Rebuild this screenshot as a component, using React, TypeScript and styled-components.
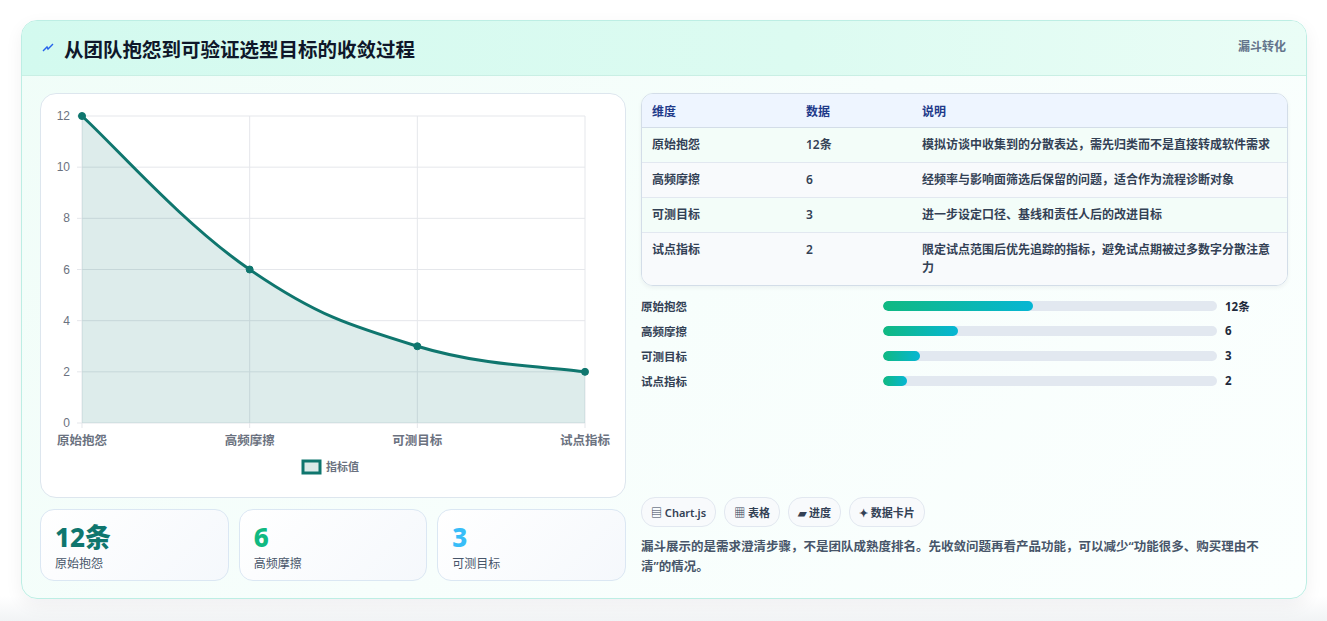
import React from 'react';
import styled, { createGlobalStyle } from 'styled-components';

const Global = createGlobalStyle`
  html, body { margin: 0; background: #fff; }
  body { font-family: "Noto Sans", "Noto Sans CJK SC", sans-serif; color: #1e293b; }
`;

const Page = styled.div`
  padding: 20px 20px 22px 21px;
  background: linear-gradient(180deg, #fff 0%, #fff 96%, #f1f3f5 100%);
`;

const Card = styled.section`
  border: 1px solid #bdeee4;
  border-radius: 16px;
  overflow: hidden;
  background: linear-gradient(135deg, #f0fdf8 0%, #f7fefc 50%, #fbfffe 100%);
  box-shadow: 0 6px 18px rgba(15, 23, 42, 0.06);
`;

const Header = styled.header`
  height: 54px;
  display: flex;
  align-items: center;
  justify-content: space-between;
  padding: 0 20px 0 20px;
  background: linear-gradient(90deg, #d3faef 0%, #dcfbf1 60%, #eafdf6 100%);
  border-bottom: 1px solid #c9efe4;
`;

const Title = styled.h2`
  margin: 0;
  display: flex;
  align-items: center;
  gap: 10px;
  font-size: 19.5px;
  font-weight: 700;
  color: #0f172a;
`;

const Tag = styled.span`
  align-self: flex-start;
  margin-top: 16px;
  font-size: 12px;
  font-weight: 700;
  color: #64748b;
`;

const Body = styled.div`
  display: grid;
  grid-template-columns: 586px 1fr;
  gap: 15px;
  padding: 17px 18px 17px 18px;
`;

const Left = styled.div`
  display: flex;
  flex-direction: column;
  gap: 11px;
`;

const ChartCard = styled.div`
  height: 403px;
  border: 1px solid #dde6ee;
  border-radius: 16px;
  background: #fff;
`;

const Stats = styled.div`
  display: grid;
  grid-template-columns: repeat(3, 1fr);
  gap: 10px;
`;

const Stat = styled.div`
  height: 72px;
  box-sizing: border-box;
  border: 1px solid #dbe7f3;
  border-radius: 14px;
  background: linear-gradient(135deg, #ffffff, #f5f8fc);
  padding: 11px 14px;
`;

const StatValue = styled.div<{ $c: string }>`
  font-size: 26px;
  font-weight: 800;
  line-height: 32px;
  color: ${(p) => p.$c};
`;

const StatLabel = styled.div`
  font-size: 12px;
  color: #475569;
  margin-top: 1px;
`;

const Right = styled.div`
  display: flex;
  flex-direction: column;
`;

const Table = styled.table`
  width: 100%;
  border-collapse: separate;
  border-spacing: 0;
  border: 1px solid #d3dde8;
  border-radius: 12px;
  overflow: hidden;
  font-size: 12px;
  box-shadow: 0 2px 4px rgba(15, 23, 42, 0.05);
  th {
    background: #eef5ff;
    color: #1e3a8a;
    font-weight: 700;
    text-align: left;
    height: 33px;
    padding: 0 10px;
    border-bottom: 1px solid #d3dde8;
  }
  td {
    font-weight: 600;
    color: #334155;
    padding: 8px 10px;
    line-height: 18px;
    vertical-align: top;
    border-bottom: 1px solid #e2e8f0;
  }
  td:last-child { padding-right: 14px; }
  tr:last-child td { border-bottom: none; }
  tbody tr:nth-child(odd) { background: #f3fdf9; }
  tbody tr:nth-child(even) { background: #f8fafc; }
`;

const Bars = styled.div`
  display: flex;
  flex-direction: column;
  gap: 8px;
  padding: 11px 0 108px;
`;

const BarRow = styled.div`
  display: grid;
  grid-template-columns: 242px 334px 1fr;
  align-items: center;
  height: 17px;
  font-size: 11.5px;
  font-weight: 600;
  color: #334155;
`;

const Track = styled.div`
  height: 10px;
  border-radius: 5px;
  background: #e2e8f0;
  overflow: hidden;
`;

const Fill = styled.div`
  height: 100%;
  border-radius: 5px;
  background: linear-gradient(90deg, #10b981, #06b6d4);
`;

const BarNum = styled.span`
  padding-left: 8px;
  font-weight: 700;
  color: #1e293b;
`;

const Chips = styled.div`
  display: flex;
  gap: 8px;
`;

const Chip = styled.span`
  height: 28px;
  display: inline-flex;
  align-items: center;
  padding: 0 9px;
  border: 1px solid #e2e8f0;
  border-radius: 14px;
  background: #f8fafc;
  font-size: 11px;
  font-weight: 600;
  color: #334155;
`;

const Note = styled.p`
  margin: 10px 0 0;
  font-size: 12.5px;
  font-weight: 600;
  line-height: 20px;
  color: #475569;
`;

const rows = [
  ['原始抱怨', '12条', '模拟访谈中收集到的分散表达，需先归类而不是直接转成软件需求'],
  ['高频摩擦', '6', '经频率与影响面筛选后保留的问题，适合作为流程诊断对象'],
  ['可测目标', '3', '进一步设定口径、基线和责任人后的改进目标'],
  ['试点指标', '2', '限定试点范围后优先追踪的指标，避免试点期被过多数字分散注意力'],
];

const bars = [
  ['原始抱怨', 45, '12条'],
  ['高频摩擦', 22.5, '6'],
  ['可测目标', 11, '3'],
  ['试点指标', 7.2, '2'],
] as const;

function Chart() {
  const x0 = 41, x1 = 544, y0 = 22, y1 = 329;
  const vals = [12, 6, 3, 2];
  const pts = vals.map((v, i) => [x0 + (i * (x1 - x0)) / 3, y1 - (v / 12) * (y1 - y0)]);
  const t = 0.4;
  let d = `M${pts[0][0]},${pts[0][1]}`;
  for (let i = 0; i < 3; i++) {
    const p0 = pts[Math.max(i - 1, 0)], p1 = pts[i], p2 = pts[i + 1], p3 = pts[Math.min(i + 2, 3)];
    const c1 = [p1[0] + ((p2[0] - p0[0]) * t) / 2, p1[1] + ((p2[1] - p0[1]) * t) / 2];
    const c2 = [p2[0] - ((p3[0] - p1[0]) * t) / 2, p2[1] - ((p3[1] - p1[1]) * t) / 2];
    d += ` C${c1[0]},${c1[1]} ${c2[0]},${c2[1]} ${p2[0]},${p2[1]}`;
  }
  const labels = ['原始抱怨', '高频摩擦', '可测目标', '试点指标'];
  return (
    <svg width="585" height="403" style={{ display: 'block' }}>
      {[0, 2, 4, 6, 8, 10, 12].map((v) => {
        const y = y1 - (v / 12) * (y1 - y0);
        return (
          <g key={v}>
            <line x1={x0 - 5} x2={x1} y1={y} y2={y} stroke="#e5e7eb" />
            <text x={x0 - 12} y={y + 4} textAnchor="end" fontSize="12" fill="#6b7280" fontFamily="Liberation Sans, sans-serif">{v}</text>
          </g>
        );
      })}
      {pts.map((p, i) => (
        <line key={i} x1={p[0]} x2={p[0]} y1={y0} y2={y1 + 5} stroke="#e5e7eb" />
      ))}
      <path d={`${d} L${x1},${y1} L${x0},${y1} Z`} fill="rgba(15,118,110,0.14)" />
      <path d={d} fill="none" stroke="#0f766e" strokeWidth="3" />
      {pts.map((p, i) => (
        <circle key={i} cx={p[0]} cy={p[1]} r="3.5" fill="#0f766e" stroke="#0f766e" />
      ))}
      {pts.map((p, i) => (
        <text key={i} x={p[0]} y={351} textAnchor="middle" fontSize="12.5" fontWeight="600" fill="#6b7280">{labels[i]}</text>
      ))}
      <rect x="262" y="367" width="17" height="12" fill="#dbeae8" stroke="#0f766e" strokeWidth="3" />
      <text x="285" y="377" fontSize="11" fontWeight="600" fill="#6b7280">指标值</text>
    </svg>
  );
}

export default function App() {
  return (
    <>
      <Global />
      <Page>
        <Card>
          <Header>
            <Title>
              <svg width="12" height="12" viewBox="0 0 12 12">
                <path d="M1 9 L5 5 L6 7 L11 2" fill="none" stroke="#2563eb" strokeWidth="1.4" />
              </svg>
              从团队抱怨到可验证选型目标的收敛过程
            </Title>
            <Tag>漏斗转化</Tag>
          </Header>
          <Body>
            <Left>
              <ChartCard>
                <Chart />
              </ChartCard>
              <Stats>
                <Stat><StatValue $c="#0f766e">12条</StatValue><StatLabel>原始抱怨</StatLabel></Stat>
                <Stat><StatValue $c="#10b981">6</StatValue><StatLabel>高频摩擦</StatLabel></Stat>
                <Stat><StatValue $c="#38bdf8">3</StatValue><StatLabel>可测目标</StatLabel></Stat>
              </Stats>
            </Left>
            <Right>
              <Table>
                <thead>
                  <tr><th style={{ width: 134 }}>维度</th><th style={{ width: 96 }}>数据</th><th>说明</th></tr>
                </thead>
                <tbody>
                  {rows.map((r) => (
                    <tr key={r[0]}><td>{r[0]}</td><td>{r[1]}</td><td>{r[2]}</td></tr>
                  ))}
                </tbody>
              </Table>
              <Bars>
                {bars.map(([l, w, n]) => (
                  <BarRow key={l}>
                    <span>{l}</span>
                    <Track><Fill style={{ width: `${w}%` }} /></Track>
                    <BarNum>{n}</BarNum>
                  </BarRow>
                ))}
              </Bars>
              <Chips>
                <Chip>▤ Chart.js</Chip>
                <Chip>▦ 表格</Chip>
                <Chip>▰ 进度</Chip>
                <Chip>✦ 数据卡片</Chip>
              </Chips>
              <Note>漏斗展示的是需求澄清步骤，不是团队成熟度排名。先收敛问题再看产品功能，可以减少“功能很多、购买理由不清”的情况。</Note>
            </Right>
          </Body>
        </Card>
      </Page>
    </>
  );
}
